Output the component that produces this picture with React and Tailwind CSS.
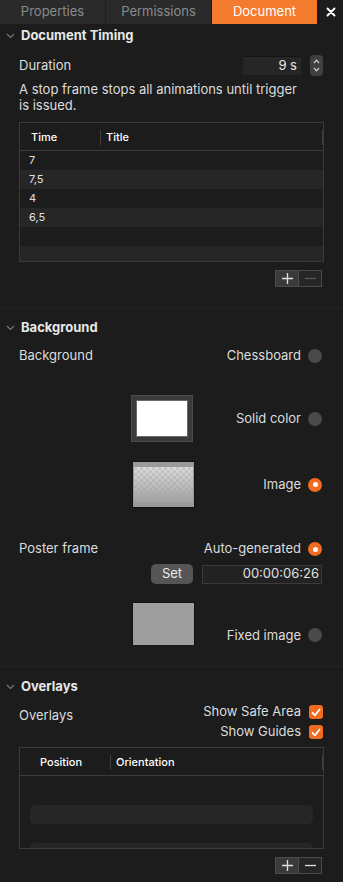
import { useState } from 'react'

const font = { fontFamily: 'Inter, "Noto Sans", sans-serif' }

function Chevron() {
  return (
    <svg width="9" height="6" viewBox="0 0 9 6" className="mr-[6px]">
      <path d="M1 1 L4.5 4.5 L8 1" fill="none" stroke="#7a7a7a" strokeWidth="1.1" />
    </svg>
  )
}

function SectionHeader({ title }) {
  return (
    <div className="flex h-[24px] items-center pl-[6px] text-[13px] font-bold text-[#e8e8e8]">
      <Chevron />
      {title}
    </div>
  )
}

function Radio({ on }) {
  return on ? (
    <span className="flex h-[14px] w-[14px] items-center justify-center rounded-full bg-[#f06a1f]">
      <span className="h-[5px] w-[5px] rounded-full bg-white" />
    </span>
  ) : (
    <span className="h-[14px] w-[14px] rounded-full bg-[#4a4a4a]" />
  )
}

function Check() {
  return (
    <span className="flex h-[14px] w-[14px] items-center justify-center rounded-[3px] bg-[#f06a1f]">
      <svg width="10" height="9" viewBox="0 0 10 9">
        <path d="M1.5 4.8 L4 7.3 L8.6 1.5" fill="none" stroke="white" strokeWidth="1.8" strokeLinecap="round" strokeLinejoin="round" />
      </svg>
    </span>
  )
}

function PlusMinus({ minusActive }) {
  return (
    <div className="mr-[21px] flex justify-end">
      <div className="flex h-[17px] border border-[#4a4a4a]">
        <div className="flex w-[22px] items-center justify-center bg-[#3a3a3a] text-[#e0e0e0]">
          <svg width="11" height="11" viewBox="0 0 11 11">
            <path d="M5.5 0 V11 M0 5.5 H11" stroke="#e0e0e0" strokeWidth="1.3" />
          </svg>
        </div>
        <div className="w-px bg-[#4a4a4a]" />
        <div className="flex w-[22px] items-center justify-center bg-[#262626]">
          <svg width="11" height="11" viewBox="0 0 11 11">
            <path d="M0 5.5 H11" stroke={minusActive ? '#e0e0e0' : '#5a5a5a'} strokeWidth="1.3" />
          </svg>
        </div>
      </div>
    </div>
  )
}

function Option({ label, on }) {
  return (
    <div className="flex items-center gap-[7px] text-[13px] text-[#dcdcdc]">
      {label}
      <Radio on={on} />
    </div>
  )
}

export default function App() {
  const [tab] = useState('Document')
  const tabs = ['Properties', 'Permissions', 'Document']
  const rows = ['7', '7,5', '4', '6,5', '', '']

  return (
    <div style={font} className="h-[882px] w-[343px] overflow-hidden bg-[#1c1c1c]">
      {/* tabs */}
      <div className="flex h-[24px] bg-[#2a2a2a] text-[13px]">
        {tabs.map((t) => (
          <div
            key={t}
            className={`flex w-[106px] items-center justify-center border-r border-[#1e1e1e] ${
              tab === t ? 'bg-[#f47b2d] text-white' : 'text-[#8a8a8a]'
            }`}
          >
            {t}
          </div>
        ))}
        <div className="flex flex-1 items-center justify-center bg-[#1c1c1c]">
          <svg width="10" height="10" viewBox="0 0 10 10">
            <path d="M1.5 1.5 L8.5 8.5 M8.5 1.5 L1.5 8.5" stroke="white" strokeWidth="2" strokeLinecap="round" />
          </svg>
        </div>
      </div>

      {/* Document Timing */}
      <SectionHeader title="Document Timing" />
      <div className="mt-[7px] flex h-[21px] items-center pl-[19px] pr-[20px] text-[13px] text-[#dcdcdc]">
        <span className="flex-1">Duration</span>
        <div className="flex h-[19px] w-[58px] items-center justify-end border-t border-[#151515] bg-[#262626] pr-[4px] text-[#e8e8e8]">
          9 s
        </div>
        <div className="ml-[9px] flex h-[21px] w-[13px] flex-col items-center justify-center gap-[3px] rounded-[4px] bg-[#404040]">
          <svg width="7" height="5" viewBox="0 0 7 5">
            <path d="M1 4 L3.5 1.2 L6 4" fill="none" stroke="#cfcfcf" strokeWidth="1.2" />
          </svg>
          <svg width="7" height="5" viewBox="0 0 7 5">
            <path d="M1 1 L3.5 3.8 L6 1" fill="none" stroke="#cfcfcf" strokeWidth="1.2" />
          </svg>
        </div>
      </div>
      <p className="mt-[5px] pl-[19px] pr-[40px] text-[13px] leading-[16px] text-[#dcdcdc]">
        A stop frame stops all animations until trigger is issued.
      </p>

      <div className="mx-[19px] mt-[9px] h-[140px] overflow-hidden border border-[#3a3a3a] bg-[#1c1c1c]">
        <div className="flex h-[28px] items-center border-b border-[#3a3a3a] pt-[2px] text-[11px] font-medium text-white">
          <span className="w-[80px] pl-[11px]">Time</span>
          <span className="h-[15px] w-px bg-[#3e3e3e]" />
          <span className="flex-1 pl-[5px]">Title</span>
          <span className="h-[15px] w-px bg-[#3e3e3e]" />
        </div>
        {rows.map((r, i) => (
          <div
            key={i}
            className={`flex h-[19px] items-center pl-[9px] text-[11px] text-[#e0e0e0] ${
              i % 2 ? 'bg-[#262626]' : ''
            }`}
          >
            {r}
          </div>
        ))}
      </div>
      <div className="mt-[8px]">
        <PlusMinus />
      </div>

      <div className="mt-[20px] h-px bg-[#242424]" />

      {/* Background */}
      <div className="mt-[8px]">
        <SectionHeader title="Background" />
      </div>
      <div className="mt-[5px] flex h-[22px] items-center pl-[19px] pr-[21px] text-[13px] text-[#dcdcdc]">
        <span className="flex-1">Background</span>
        <Option label="Chessboard" />
      </div>

      <div className="mt-[28px] flex h-[47px] items-center pl-[131px] pr-[21px]">
        <div className="flex h-[47px] w-[62px] items-center justify-center border border-[#4a4a4a] bg-[#3a3a3a]">
          <div className="h-[37px] w-[52px] border border-[#6a6a6a] bg-white" />
        </div>
        <div className="flex flex-1 justify-end">
          <Option label="Solid color" />
        </div>
      </div>

      <div className="mt-[19px] flex h-[47px] items-center pl-[132px] pr-[21px]">
        <div className="flex h-[47px] w-[63px] flex-col border border-[#111] bg-[#9a9a9a] px-px">
          <div className="h-[5px]" />
          <div className="flex-1 bg-[repeating-conic-gradient(#dcdcdc_0_25%,#c8c8c8_0_50%)] bg-[length:6px_6px]">
            <div className="h-full w-full bg-gradient-to-b from-transparent to-[#a0a0a0]" />
          </div>
          <div className="h-[4px]" />
        </div>
        <div className="flex flex-1 justify-end">
          <Option label="Image" on />
        </div>
      </div>

      <div className="mt-[31px] flex h-[20px] items-center pl-[19px] pr-[21px] text-[13px] text-[#dcdcdc]">
        <span className="flex-1">Poster frame</span>
        <Option label="Auto-generated" on />
      </div>
      <div className="mt-[5px] flex h-[20px] items-center justify-end pr-[21px] text-[13px]">
        <div className="flex h-[20px] w-[42px] items-center justify-center rounded-[5px] bg-[#555555] text-[#eaeaea]">
          Set
        </div>
        <div className="ml-[9px] flex h-[19px] w-[120px] items-center justify-end border border-[#3a3a3a] bg-[#222222] pr-[2px] text-[#e0e0e0]">
          00:00:06:26
        </div>
      </div>

      <div className="mt-[18px] flex h-[43px] items-end pl-[132px] pr-[21px]">
        <div className="h-[43px] w-[63px] border-x border-t border-[#111] bg-[#9e9e9e]" />
        <div className="flex flex-1 justify-end">
          <Option label="Fixed image" />
        </div>
      </div>

      <div className="mt-[21px] h-px bg-[#242424]" />

      {/* Overlays */}
      <div className="mt-[8px]">
        <SectionHeader title="Overlays" />
      </div>
      <div className="flex pl-[19px] pr-[20px] text-[13px] text-[#dcdcdc]">
        <span className="mt-[7px] flex-1">Overlays</span>
        <div className="mt-[5px] flex flex-col items-end gap-[4px]">
          <div className="flex h-[16px] items-center gap-[8px]">
            Show Safe Area
            <Check />
          </div>
          <div className="flex h-[16px] items-center gap-[8px]">
            Show Guides
            <Check />
          </div>
        </div>
      </div>

      <div className="mx-[19px] mt-[7px] h-[102px] overflow-hidden border border-[#3a3a3a]">
        <div className="flex h-[28px] items-center border-b border-[#3a3a3a] pt-[2px] text-[11px] font-medium text-white">
          <span className="w-[90px] pl-[20px]">Position</span>
          <span className="h-[15px] w-px bg-[#3e3e3e]" />
          <span className="flex-1 pl-[5px]">Orientation</span>
          <span className="h-[15px] w-px bg-[#3e3e3e]" />
        </div>
        <div className="flex flex-col gap-[19px] px-[10px] pt-[29px]">
          <div className="h-[19px] rounded-[5px] bg-[#262626]" />
          <div className="h-[19px] rounded-[5px] bg-[#262626]" />
        </div>
      </div>
      <div className="mt-[8px]">
        <PlusMinus minusActive />
      </div>
    </div>
  )
}
